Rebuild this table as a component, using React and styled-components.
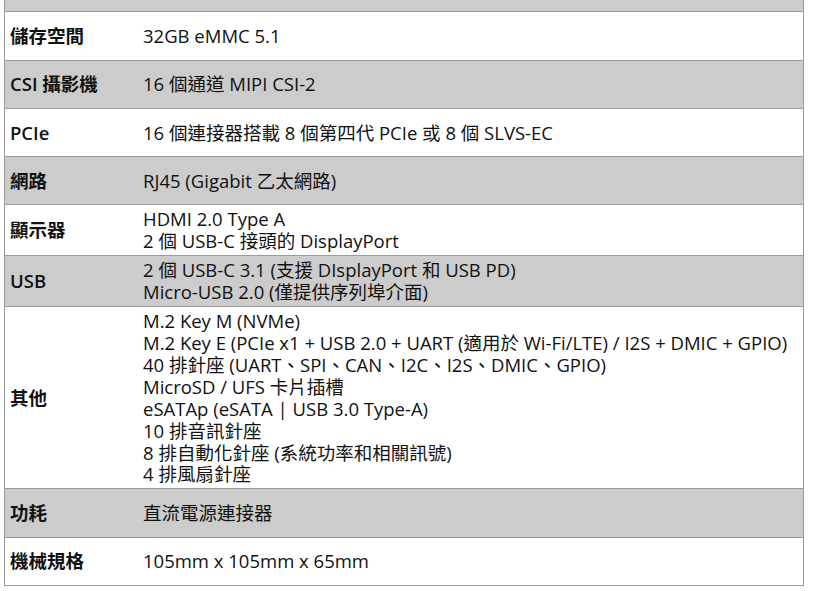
import React from "react";
import styled, { createGlobalStyle } from "styled-components";

const specs = [
  { label: "記憶體", values: ["8GB 128 位元 LPDDR4x"] },
  { label: "儲存空間", values: ["32GB eMMC 5.1"] },
  { label: "CSI 攝影機", values: ["16 個通道 MIPI CSI-2"] },
  { label: "PCIe", values: ["16 個連接器搭載 8 個第四代 PCIe 或 8 個 SLVS-EC"] },
  { label: "網路", values: ["RJ45 (Gigabit 乙太網路)"] },
  { label: "顯示器", values: ["HDMI 2.0 Type A", "2 個 USB-C 接頭的 DisplayPort"] },
  {
    label: "USB",
    values: ["2 個 USB-C 3.1 (支援 DIsplayPort 和 USB PD)", "Micro-USB 2.0 (僅提供序列埠介面)"],
  },
  {
    label: "其他",
    values: [
      "M.2 Key M (NVMe)",
      "M.2 Key E (PCIe x1 + USB 2.0 + UART (適用於 Wi-Fi/LTE) / I2S + DMIC + GPIO)",
      "40 排針座 (UART、SPI、CAN、I2C、I2S、DMIC、GPIO)",
      "MicroSD / UFS 卡片插槽",
      "eSATAp (eSATA | USB 3.0 Type-A)",
      "10 排音訊針座",
      "8 排自動化針座 (系統功率和相關訊號)",
      "4 排風扇針座",
    ],
  },
  { label: "功耗", values: ["直流電源連接器"] },
  { label: "機械規格", values: ["105mm x 105mm x 65mm"] },
];

const GlobalStyle = createGlobalStyle`
  html, body {
    margin: 0;
    padding: 0;
    background: #fff;
    overflow: hidden;
  }
  body {
    font-family: "Open Sans", "Noto Sans CJK TC", sans-serif;
    color: #111;
  }
`;

const Page = styled.div`
  padding-left: 4px;
  margin-top: -36px;
`;

const SpecTable = styled.table`
  width: 800px;
  border-collapse: collapse;
  border-left: 1px solid #9a9a9a;
  border-right: 1px solid #9a9a9a;
  font-size: 18.5px;
  line-height: 21.9px;
`;

const Row = styled.tr`
  background: ${(props) => (props.$shaded ? "#cccccc" : "#ffffff")};
  border-bottom: 1px solid #9a9a9a;
`;

const Label = styled.th`
  width: 128px;
  height: 41.3px;
  padding: 3px 0 3px 5px;
  text-align: left;
  vertical-align: middle;
  font-weight: 600;
`;

const Value = styled.td`
  padding: 3px 5px;
  vertical-align: middle;
  font-weight: 400;
`;

const Line = styled.div`
  white-space: nowrap;
`;

export default function App() {
  return (
    <>
      <GlobalStyle />
      <Page>
        <SpecTable>
          <tbody>
            {specs.map((spec, i) => (
              <Row key={spec.label} $shaded={i % 2 === 0}>
                <Label>{spec.label}</Label>
                <Value>
                  {spec.values.map((v) => (
                    <Line key={v}>{v}</Line>
                  ))}
                </Value>
              </Row>
            ))}
          </tbody>
        </SpecTable>
      </Page>
    </>
  );
}
